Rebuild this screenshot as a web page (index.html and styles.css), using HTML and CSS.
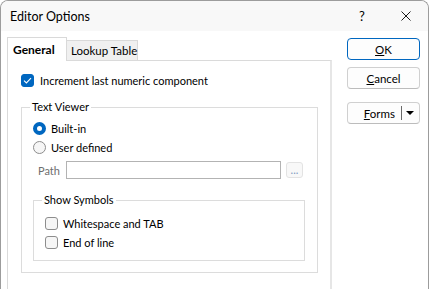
FILE: index.html
```html
<!DOCTYPE html>
<html>
<head>
<meta charset="utf-8">
<title>Editor Options</title>
<link rel="stylesheet" href="styles.css">
</head>
<body>
<div class="window">
  <div class="titlebar">
    <span class="title">Editor Options</span>
    <span class="caption-btn">?</span>
    <span class="caption-btn">
      <svg width="10" height="10" viewBox="0 0 10 10"><path d="M0.5 0.5 L9.5 9.5 M9.5 0.5 L0.5 9.5" stroke="#1b1b1b" stroke-width="1" fill="none"/></svg>
    </span>
  </div>
  <div class="client">
    <div class="main">
      <div class="tabs">
        <div class="tab active">General</div>
        <div class="tab">Lookup Table</div>
      </div>
      <div class="panel">
        <div class="row">
          <span class="check on">
            <svg width="9" height="7" viewBox="0 0 9 7"><path d="M1 3.6 L3.4 6 L8 1.2" stroke="#fff" stroke-width="1.1" fill="none"/></svg>
          </span>
          <span>Increment last numeric component</span>
        </div>

        <fieldset class="group viewer">
          <legend>Text Viewer</legend>
          <div class="opt first"><span class="radio on"></span><span>Built-in</span></div>
          <div class="opt"><span class="radio"></span><span>User defined</span></div>
          <div class="path-row">
            <span class="path-label">Path</span>
            <span class="path-input"></span>
            <span class="browse">...</span>
          </div>

          <fieldset class="group symbols">
            <legend>Show Symbols</legend>
            <div class="opt first"><span class="check"></span><span>Whitespace and TAB</span></div>
            <div class="opt"><span class="check"></span><span>End of line</span></div>
          </fieldset>
        </fieldset>
      </div>
    </div>

    <div class="side">
      <div class="btn default"><u>O</u>K</div>
      <div class="btn cancel"><u>C</u>ancel</div>
      <div class="btn forms"><span><u>F</u>orms</span><span class="split"></span><span class="caret"></span></div>
    </div>
  </div>
</div>
</body>
</html>
```

FILE: styles.css
```css
* {
  box-sizing: border-box;
  margin: 0;
  padding: 0;
}

body {
  background: #fff;
  font-family: Lato, "Noto Sans", sans-serif;
  font-size: 11px;
  color: #000;
}

.window {
  width: 429px;
  height: 289px;
  border: 1px solid #9c9c9c;
  border-bottom: none;
  border-radius: 8px 8px 0 0;
  background: #fff;
  overflow: hidden;
  display: flex;
  flex-direction: column;
}

/* title bar */
.titlebar {
  flex: none;
  height: 30px;
  display: flex;
  align-items: center;
  padding-left: 9px;
  background: #f8f8f8;
  font-size: 12.5px;
}

.title {
  flex: 1;
}

.caption-btn {
  width: 44px;
  height: 30px;
  display: flex;
  justify-content: center;
  align-items: center;
  font-size: 13px;
}

/* client area */
.client {
  flex: 1;
  display: flex;
  padding: 6px 0 0 6px;
}

.tabs {
  display: flex;
  align-items: flex-end;
  height: 23px;
}

.tab {
  height: 20px;
  width: 71px;
  padding-left: 4px;
  display: flex;
  align-items: center;
  white-space: nowrap;
  background: #f0f0f0;
  border: 1px solid #d9d9d9;
  border-left: none;
  border-bottom: none;
  font-size: 11.5px;
}

.tab.active {
  position: relative;
  z-index: 1;
  width: 60px;
  height: 24px;
  margin-bottom: -1px;
  padding-left: 5px;
  padding-bottom: 1px;
  background: #fff;
  border-left: 1px solid #d9d9d9;
  font-weight: bold;
  font-size: 12px;
}

.panel {
  width: 325px;
  height: 240px;
  border: 1px solid #dadada;
  border-right: 2px solid #e6e6e6;
  padding: 13px 0 0 13px;
}

.row {
  height: 13px;
  display: flex;
  align-items: center;
  gap: 6px;
}

.check {
  flex: none;
  width: 13px;
  height: 13px;
  border: 1px solid #8d8d8d;
  border-radius: 3px;
  background: #f6f6f6;
  display: flex;
  justify-content: center;
  align-items: center;
}

.check.on {
  background: #0067c0;
  border-color: #0067c0;
}

.radio {
  flex: none;
  width: 13px;
  height: 13px;
  border: 1px solid #8d8d8d;
  border-radius: 50%;
  background: #f6f6f6;
}

.radio.on {
  border: 4px solid #0067c0;
  background: #fff;
}

/* group boxes */
.group {
  border: 1px solid #dcdcdc;
  padding: 0 11px;
}

.group legend {
  line-height: 14px;
  padding: 0 2px;
  margin-left: -3px;
}

.viewer {
  width: 297px;
  margin-top: 13px;
  padding-bottom: 11px;
}

.symbols {
  width: 272px;
  margin-top: 14px;
  padding-bottom: 8px;
}

.opt {
  height: 19px;
  display: flex;
  align-items: center;
  gap: 5px;
}

.viewer > .opt.first {
  margin-top: 5px;
}

.symbols > .opt.first {
  margin-top: 7px;
}

.path-row {
  display: flex;
  align-items: center;
  height: 18px;
  margin-top: 4px;
  padding-left: 5px;
}

.path-label {
  width: 28px;
  color: #6e6e6e;
}

.path-input {
  width: 215px;
  height: 18px;
  border: 1px solid #b3b3b3;
  background: #fff;
}

.browse {
  width: 17px;
  height: 16px;
  margin-left: 5px;
  border: 1px solid #e3e3e3;
  border-radius: 3px;
  background: #f8f8f8;
  color: #7d9ac0;
  font-size: 11px;
  line-height: 13px;
  text-align: center;
}

/* right column */
.side {
  width: 73px;
  margin-left: 15px;
  padding-top: 1px;
  display: flex;
  flex-direction: column;
}

.btn {
  height: 22px;
  border: 1px solid #d0d0d0;
  border-bottom-color: #bcbcbc;
  border-radius: 4px;
  background: #fdfdfd;
  display: flex;
  justify-content: center;
  align-items: center;
  font-size: 11.5px;
}

.btn.default {
  border-color: #0067c0;
}

.btn.cancel {
  margin-top: 7px;
}

.btn.forms {
  margin-top: 13px;
  justify-content: flex-end;
  padding-right: 5px;
}

.split {
  width: 1px;
  height: 14px;
  background: #6a6a6a;
  margin: 0 4px 0 6px;
}

.caret {
  width: 0;
  height: 0;
  border-left: 4px solid transparent;
  border-right: 4px solid transparent;
  border-top: 4px solid #000;
}
```
